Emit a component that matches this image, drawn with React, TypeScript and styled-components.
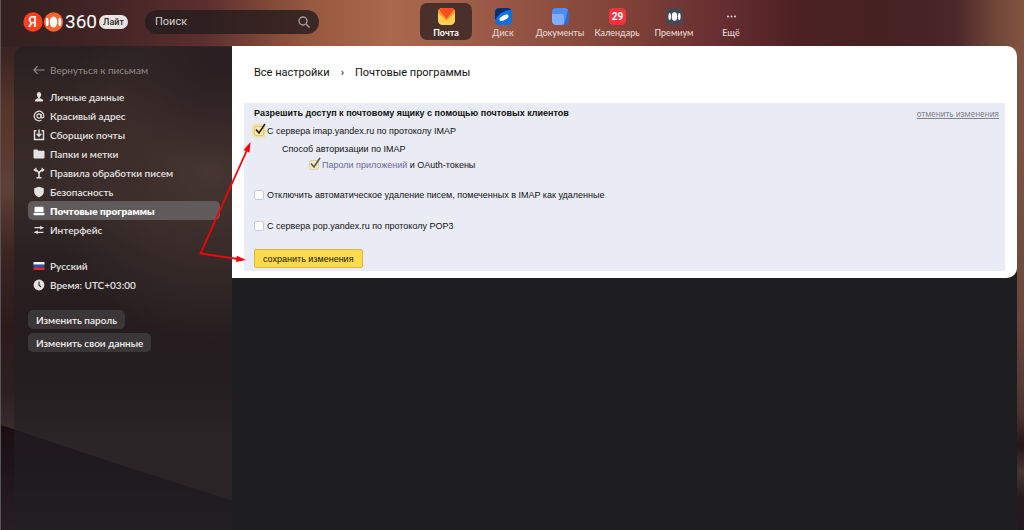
import React from 'react';
import styled, { createGlobalStyle, css } from 'styled-components';

const ui = 'Roboto, "Noto Sans", sans-serif';
const side = 'Lato, Roboto, sans-serif';
const form = '"Liberation Sans", Arial, sans-serif';

const GlobalStyle = createGlobalStyle`
  *, *::before, *::after { box-sizing: border-box; }
  body { margin: 0; background: #1d1719; font-family: ${ui}; }
  button, input { font: inherit; }
  a { color: inherit; text-decoration: none; }
  ul { list-style: none; margin: 0; padding: 0; }
`;

const Page = styled.div`
  position: relative;
  isolation: isolate;
  min-height: 100vh;
  display: flex;
  flex-direction: column;
  border-left: 1px solid #5b5556;
  overflow: hidden;
`;

const Backdrop = styled.svg`
  position: absolute;
  inset: 0;
  width: 100%;
  height: 100%;
  z-index: -1;
`;

const Header = styled.header`
  position: relative;
  height: 46px;
  display: flex;
  align-items: center;
  padding: 0 0 3px 22px;
`;

const Logo = styled.a`
  display: flex;
  align-items: center;
  gap: 2px;
  width: 106px;
  color: #fff;
`;

const LogoNumber = styled.span`
  font-size: 19px;
  line-height: 20px;
`;

const LiteBadge = styled.span`
  padding: 0 4px;
  border-radius: 7px;
  background: #e9e5e5;
  color: #2b2324;
  font-size: 9px;
  font-weight: 500;
  line-height: 14px;
`;

const Search = styled.label`
  display: flex;
  align-items: center;
  width: 174px;
  height: 24px;
  margin-left: 16px;
  padding: 0 9px 0 10px;
  border-radius: 12px;
  background: rgba(36, 28, 29, 0.8);
`;

const SearchInput = styled.input`
  flex: 1;
  min-width: 0;
  border: 0;
  padding: 0;
  outline: 0;
  background: none;
  color: #fff;
  font-size: 11px;
  &::placeholder { color: #d6d0d0; opacity: 1; }
`;

const Services = styled.nav`
  display: flex;
  gap: 5px;
  margin-left: 101px;
`;

const Service = styled.a<{ $active?: boolean }>`
  display: flex;
  flex-direction: column;
  align-items: center;
  gap: 1px;
  width: 52px;
  height: 37px;
  padding-top: 5px;
  border-radius: 7px;
  color: ${p => (p.$active ? '#fff' : '#e6d9d7')};
  background: ${p => (p.$active ? '#49302a' : 'transparent')};
  font-family: ${side};
  font-size: 9px;
  font-weight: ${p => (p.$active ? 700 : 500)};
  line-height: 14px;
  white-space: nowrap;
`;

const Body = styled.div`
  flex: 1;
  display: flex;
  margin: 0 7px 0 13px;
`;

const Sidebar = styled.aside`
  width: 218px;
  flex: none;
  padding: 14px 12px 0 14px;
  border-radius: 12px 0 0 0;
  background: rgba(32, 31, 34, 0.62);
  color: #e6e2e2;
  font-family: ${side};
  font-size: 10px;
`;

const itemStyle = css`
  display: flex;
  align-items: center;
  gap: 5px;
  height: 19px;
  padding: 0 5px;
  border-radius: 5px;
`;

const BackLink = styled.a`
  ${itemStyle}
  color: #948a89;
`;

const Menu = styled.ul`
  margin-top: 8px;
`;

const MenuLink = styled.a<{ $active?: boolean }>`
  ${itemStyle}
  background: ${p => (p.$active ? '#615a5a' : 'transparent')};
  color: ${p => (p.$active ? '#fff' : 'inherit')};
  font-weight: ${p => (p.$active ? 800 : 600)};
`;

const LocaleMenu = styled(Menu)`
  margin-top: 17px;
`;

const Actions = styled.div`
  display: flex;
  flex-direction: column;
  align-items: flex-start;
  gap: 4px;
  margin-top: 16px;
`;

const ActionButton = styled.button`
  height: 19px;
  padding: 0 8px;
  border: 0;
  border-radius: 5px;
  background: #3b3638;
  color: #f2f0f0;
  font-weight: 600;
  font-size: 10px;
`;

const Content = styled.main`
  flex: 1;
  background: #1e1e20;
  border-radius: 0 12px 0 0;
`;

const Card = styled.section`
  padding: 17px 12px 7px 12px;
  background: #fff;
  border-radius: 0 10px 10px 0;
`;

const Breadcrumbs = styled.nav`
  display: flex;
  align-items: center;
  gap: 11px;
  padding-left: 10px;
  font-size: 11px;
  line-height: 20px;
  color: #111;
`;

const Form = styled.form`
  margin-top: 20px;
  padding: 3px 6px 3px 10px;
  background: #e9ecf5;
  font-family: ${form};
  font-size: 9px;
  line-height: 14px;
  color: #111;
`;

const FormHead = styled.div`
  display: flex;
  justify-content: space-between;
`;

const FormTitle = styled.h1`
  margin: 0;
  font-size: 9px;
  line-height: 14px;
`;

const CancelLink = styled.a`
  color: #808188;
  font-family: "Noto Sans", sans-serif;
  font-size: 8px;
  line-height: 16px;
  text-decoration: underline;
`;

const Option = styled.div<{ $nested?: boolean; $gap: number }>`
  display: flex;
  align-items: center;
  gap: 3px;
  height: 14px;
  margin-top: ${p => p.$gap}px;
  padding-left: ${p => (p.$nested ? 55 : 0)}px;
`;

const MethodTitle = styled.p`
  margin: 4px 0 0 28px;
`;

const Check = styled.input<{ $glow?: boolean }>`
  appearance: none;
  position: relative;
  flex: none;
  width: 10px;
  height: 10px;
  margin: 0;
  border: 1px solid #c9cbd2;
  border-radius: 2px;
  background: #fff;
  &:checked {
    border-color: #dfc97c;
    background: #fbe9a6;
    box-shadow: ${p => (p.$glow ? '0 0 3px 1px #f5d866' : 'none')};
  }
`;

const CheckBox = styled.span<{ $dim?: boolean }>`
  position: relative;
  display: flex;
  opacity: ${p => (p.$dim ? 0.7 : 1)};
`;

const Tick = styled.svg`
  position: absolute;
  left: 0;
  top: -3px;
  pointer-events: none;
`;

const PasswordLink = styled.a`
  color: #6f66a3;
`;

const SaveButton = styled.button`
  display: block;
  height: 19px;
  margin-top: 16px;
  padding: 0 8px;
  border: 1px solid #d9b63c;
  border-radius: 2px;
  background: #ffdb4d;
  color: #111;
  font-size: 9px;
`;

const Pointer = styled.svg`
  position: absolute;
  left: 0;
  top: 0;
  pointer-events: none;
`;

const Glyph = ({ children, size = 12 }: { children: React.ReactNode; size?: number }) => (
  <svg width={size} height={size} viewBox="0 0 12 12" fill="currentColor" aria-hidden="true">{children}</svg>
);

const stroke = { fill: 'none', stroke: 'currentColor', strokeWidth: 1.2 };

const icons = {
  back: <Glyph><path d="M4.500 2.200 1 6 4.500 9.800M1 6H11.500" {...stroke} /></Glyph>,
  person: <Glyph><ellipse cx="6" cy="3.700" rx="2.200" ry="2.600" /><path d="M5 5h2v2H5zM2 10.500V9.200Q2 8.200 3.200 7.900L5 7.300h2l1.800.6Q10 8.200 10 9.200v1.300z" /></Glyph>,
  at: <Glyph><circle cx="6" cy="6" r="2.100" {...stroke} /><path d="M8.100 4v2.700q0 1.200 1.200 1.200 1.500 0 1.500-2A4.800 4.800 0 1 0 8.500 10.100" {...stroke} /></Glyph>,
  inbox: <Glyph><path d="M3.500 1.800H1.500v8.700h9V1.800H8.500" {...stroke} strokeWidth={1.400} /><path d="M6 .6v6M3.600 4.800 6 7.200 8.400 4.800" {...stroke} strokeWidth={1.400} /></Glyph>,
  folder: <Glyph><path d="M.5 2.500q0-1 1-1h2.700l1.300 1.300h5q1 0 1 1v5.700q0 1-1 1h-9q-1 0-1-1z" /></Glyph>,
  rules: <Glyph><path d="M6 10.500V7.500Q6 4 2.500 3M6 7.500Q6 4 9.500 3M3.500 10.700h5" {...stroke} strokeWidth={1.500} /><path d="M.2 2.900 3.400.6v4.600zM11.800 2.900 8.600.6v4.600z" /></Glyph>,
  shield: <Glyph><path d="M6 .8 10.800 2.300V5.500Q10.800 9.600 6 11.400 1.200 9.600 1.200 5.500V2.300z" /></Glyph>,
  laptop: <Glyph><path d="M1.500 2.700q0-.9.900-.9h7.200q.9 0 .9.900v4.500h-9zM.5 8h11v1.200q0 1-1 1h-9q-1 0-1-1z" /></Glyph>,
  sliders: <Glyph><path d="M1.500 3.700h9M1.500 8.300h9" {...stroke} /><path d="M7.200 1.700 10.700 3.700 7.200 5.700zM4.800 6.300 1.300 8.300 4.800 10.300z" /></Glyph>,
  flag: <Glyph><path fill="#fff" d="M.5 2h11v2.700H.5z" /><path fill="#2450c0" d="M.5 4.700h11v2.700H.5z" /><path fill="#dd2b2b" d="M.5 7.400h11v2.600H.5z" /></Glyph>,
  clock: <Glyph><circle cx="6" cy="6" r="5.400" /><path d="M6 2.600V6.200L8 8" fill="none" stroke="#2b2728" strokeWidth={1.100} /></Glyph>,
};

const menu = [
  { icon: icons.person, label: 'Личные данные' },
  { icon: icons.at, label: 'Красивый адрес' },
  { icon: icons.inbox, label: 'Сборщик почты' },
  { icon: icons.folder, label: 'Папки и метки' },
  { icon: icons.rules, label: 'Правила обработки писем' },
  { icon: icons.shield, label: 'Безопасность' },
  { icon: icons.laptop, label: 'Почтовые программы', active: true },
  { icon: icons.sliders, label: 'Интерфейс' },
];

const locale = [
  { icon: icons.flag, label: 'Русский' },
  { icon: icons.clock, label: 'Время: UTC+03:00' },
];

const Tile = ({ fill, children }: { fill: string; children: React.ReactNode }) => (
  <svg width="17" height="17" viewBox="0 0 17 17" aria-hidden="true">
    <rect width="17" height="17" rx="4.500" fill={fill} />
    {children}
  </svg>
);

const services = [
  {
    label: 'Почта', active: true,
    icon: <Tile fill="#ffcf55"><path fill="#ff9a2a" d="M0 5V4.500Q0 0 4.500 0h8Q17 0 17 4.500V5L8.500 12.500z" /><path fill="#fb4d21" d="M1.500 1Q2.500 0 4.500 0h8q2 0 3 1l.5.800L8.500 11 1 1.800z" /></Tile>,
  },
  {
    label: 'Диск',
    icon: <Tile fill="#0d6fe0"><path fill="#0a2f70" d="M0 9V4.500Q0 0 4.500 0h8Q15 0 16 1.700 6 2 0 12z" /><path fill="#2a97ff" d="M2 13Q3 5 16 3.500 13 4 8 6 3 9 2 13z" /><ellipse cx="9" cy="9.800" rx="5" ry="2.300" fill="#fff" transform="rotate(-28 9 9.800)" /></Tile>,
  },
  {
    label: 'Документы',
    icon: <Tile fill="#3a66c4"><path fill="#4f8df5" d="M4 0h8.500Q15 0 16 2L12 17 0 6V4.500Q0 0 4 0z" /><path fill="#82adff" d="M0 6h10q2 0 2 2v6q0 3-2.500 3h-5Q0 17 0 12.500z" /></Tile>,
  },
  {
    label: 'Календарь',
    icon: <Tile fill="#f5333f"><text x="8.500" y="12" textAnchor="middle" fontFamily={ui} fontWeight="700" fontSize="10" fill="#fff">29</text></Tile>,
  },
  {
    label: 'Премиум',
    icon: <Tile fill="#464853"><ellipse cx="8.500" cy="8.500" rx="2.800" ry="4.300" fill="#fff" /><ellipse cx="3.700" cy="8.500" rx="1.300" ry="3.500" fill="#fff" /><ellipse cx="13.300" cy="8.500" rx="1.300" ry="3.500" fill="#fff" /></Tile>,
  },
  {
    label: 'Ещё',
    icon: <svg width="17" height="17" viewBox="0 0 17 17" fill="#e6d9d7" aria-hidden="true"><circle cx="5" cy="8.500" r="1" /><circle cx="8.500" cy="8.500" r="1" /><circle cx="12" cy="8.500" r="1" /></svg>,
  },
];

const TickMark = () => (
  <Tick width="13" height="12" viewBox="0 0 13 12" aria-hidden="true">
    <path d="M2 6.500 5 10 11 1" fill="none" stroke="#1c1a12" strokeWidth="1.600" />
  </Tick>
);

export default function App() {
  return (
    <Page>
      <GlobalStyle />
      <Backdrop viewBox="0 0 1024 530" preserveAspectRatio="none" aria-hidden="true">
        <defs>
          <linearGradient id="sky" x1="0" y1="0" x2="1024" y2="0" gradientUnits="userSpaceOnUse">
            <stop offset="0" stopColor="#33201f" />
            <stop offset=".1" stopColor="#432425" />
            <stop offset=".2" stopColor="#5c2f2f" />
            <stop offset=".3" stopColor="#96583f" />
            <stop offset=".38" stopColor="#aa694d" />
            <stop offset=".48" stopColor="#9a5947" />
            <stop offset=".6" stopColor="#824438" />
            <stop offset=".7" stopColor="#672f31" />
            <stop offset=".78" stopColor="#4d2124" />
            <stop offset=".86" stopColor="#452122" />
            <stop offset=".93" stopColor="#4a2529" />
            <stop offset=".97" stopColor="#6e4537" />
            <stop offset="1" stopColor="#825542" />
          </linearGradient>
          <linearGradient id="left" x1="0" y1="0" x2="0" y2="530" gradientUnits="userSpaceOnUse">
            <stop offset="0" stopColor="#33201f" />
            <stop offset=".09" stopColor="#3a2322" />
            <stop offset=".2" stopColor="#543529" />
            <stop offset=".36" stopColor="#5d4036" />
            <stop offset=".48" stopColor="#3b2422" />
            <stop offset=".62" stopColor="#2c1a1b" />
            <stop offset=".74" stopColor="#2d2020" />
            <stop offset=".84" stopColor="#403131" />
            <stop offset="1" stopColor="#382b2c" />
          </linearGradient>
          <radialGradient id="shade" cx="220" cy="60" r="110" gradientUnits="userSpaceOnUse">
            <stop offset="0" stopColor="#3a1c22" />
            <stop offset="1" stopColor="#3a1c22" stopOpacity="0" />
          </radialGradient>
          <radialGradient id="warm" cx="210" cy="170" r="170" gradientUnits="userSpaceOnUse">
            <stop offset="0" stopColor="#855c48" />
            <stop offset=".5" stopColor="#6e4b3d" stopOpacity=".7" />
            <stop offset="1" stopColor="#6e4b3d" stopOpacity="0" />
          </radialGradient>
          <linearGradient id="ground" x1="0" y1="425" x2="0" y2="530" gradientUnits="userSpaceOnUse">
            <stop offset="0" stopColor="#1a0e13" />
            <stop offset="1" stopColor="#261d22" />
          </linearGradient>
          <linearGradient id="right" x1="0" y1="0" x2="0" y2="530" gradientUnits="userSpaceOnUse">
            <stop offset="0" stopColor="#825542" />
            <stop offset=".3" stopColor="#7c5141" />
            <stop offset=".6" stopColor="#68483c" />
            <stop offset=".78" stopColor="#4c3432" />
            <stop offset=".84" stopColor="#24161b" />
            <stop offset=".89" stopColor="#453535" />
            <stop offset=".94" stopColor="#281b20" />
            <stop offset="1" stopColor="#22171c" />
          </linearGradient>
        </defs>
        <rect width="1024" height="530" fill="url(#left)" />
        <rect x="14" y="46" width="226" height="300" fill="url(#warm)" />
        <rect x="100" y="46" width="140" height="130" fill="url(#shade)" />
        <path d="M0 425Q45 440 90 455T180 484L260 510V530H0z" fill="url(#ground)" />
        <rect width="1024" height="47" fill="url(#sky)" />
        <rect x="1000" y="46" width="24" height="484" fill="url(#right)" />
      </Backdrop>

      <Header>
        <Logo href="#" aria-label="Яндекс 360">
          <svg width="40" height="20" viewBox="0 0 40 20" aria-hidden="true">
            <circle cx="10" cy="10" r="9.700" fill="#fc3f1d" />
            <text x="9.500" y="15" textAnchor="middle" fontFamily={ui} fontSize="14" fontWeight="500" fill="#fff">Я</text>
            <circle cx="30.500" cy="10" r="9.700" fill="#fa6330" />
            <ellipse cx="30.500" cy="10" rx="3.700" ry="5.600" fill="#fff" />
            <ellipse cx="24.200" cy="10" rx="1.500" ry="4.300" fill="#fff" />
            <ellipse cx="36.800" cy="10" rx="1.500" ry="4.300" fill="#fff" />
          </svg>
          <LogoNumber>360</LogoNumber>
          <LiteBadge>Лайт</LiteBadge>
        </Logo>
        <Search>
          <SearchInput type="search" placeholder="Поиск" aria-label="Поиск" />
          <svg width="12" height="12" viewBox="0 0 12 12" fill="none" stroke="#a59c9b" strokeWidth="1.400" aria-hidden="true">
            <circle cx="5" cy="5" r="4" /><path d="M8 8l3.500 3.500" />
          </svg>
        </Search>
        <Services>
          {services.map(s => (
            <Service key={s.label} href="#" $active={s.active}>{s.icon}{s.label}</Service>
          ))}
        </Services>
      </Header>

      <Body>
        <Sidebar>
          <BackLink href="#">{icons.back}Вернуться к письмам</BackLink>
          <Menu>
            {menu.map(m => (
              <li key={m.label}><MenuLink href="#" $active={m.active}>{m.icon}{m.label}</MenuLink></li>
            ))}
          </Menu>
          <LocaleMenu>
            {locale.map(m => (
              <li key={m.label}><MenuLink href="#">{m.icon}{m.label}</MenuLink></li>
            ))}
          </LocaleMenu>
          <Actions>
            <ActionButton type="button">Изменить пароль</ActionButton>
            <ActionButton type="button">Изменить свои данные</ActionButton>
          </Actions>
        </Sidebar>

        <Content>
          <Card>
            <Breadcrumbs>
              <a href="#">Все настройки</a>
              <span>›</span>
              <span>Почтовые программы</span>
            </Breadcrumbs>
            <Form onSubmit={e => e.preventDefault()}>
              <FormHead>
                <FormTitle>Разрешить доступ к почтовому ящику с помощью почтовых клиентов</FormTitle>
                <CancelLink href="#">отменить изменения</CancelLink>
              </FormHead>
              <Option $gap={2}>
                <CheckBox><Check id="imap" type="checkbox" defaultChecked $glow /><TickMark /></CheckBox>
                <label htmlFor="imap">С сервера imap.yandex.ru по протоколу IMAP</label>
              </Option>
              <MethodTitle>Способ авторизации по IMAP</MethodTitle>
              <Option $nested $gap={2}>
                <CheckBox $dim><Check id="tokens" type="checkbox" defaultChecked disabled /><TickMark /></CheckBox>
                <label htmlFor="tokens"><PasswordLink href="#">Пароли приложений</PasswordLink> и OAuth-токены</label>
              </Option>
              <Option $gap={16}>
                <Check id="keep" type="checkbox" />
                <label htmlFor="keep">Отключить автоматическое удаление писем, помеченных в IMAP как удаленные</label>
              </Option>
              <Option $gap={17}>
                <Check id="pop" type="checkbox" />
                <label htmlFor="pop">С сервера pop.yandex.ru по протоколу POP3</label>
              </Option>
              <SaveButton type="submit">сохранить изменения</SaveButton>
            </Form>
          </Card>
        </Content>
      </Body>

      <Pointer width="260" height="280" viewBox="1 0 260 280" aria-hidden="true">
        <path d="M247 150 200.500 253.500 238 259" fill="none" stroke="#fb0007" strokeWidth="1.800" />
        <path d="M250.500 142 249.500 152.500 243.500 150zM246 260 236 262 236.800 255.800z" fill="#fb0007" />
      </Pointer>
    </Page>
  );
}
